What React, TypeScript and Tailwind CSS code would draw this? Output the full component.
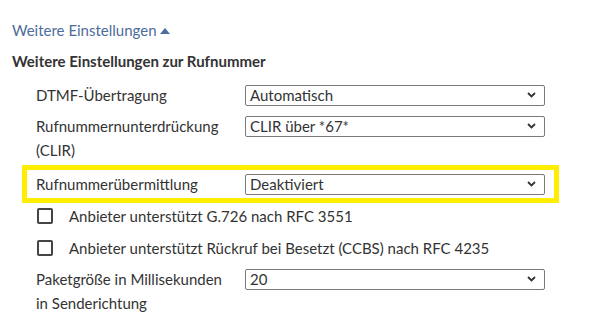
import type React from 'react';

const font = { fontFamily: 'Lato, "Open Sans", sans-serif' };

const Chevron = () => (
  <svg
    className="pointer-events-none absolute right-[9px] top-1/2 -translate-y-1/2"
    width="9"
    height="6"
    viewBox="0 0 9 6"
  >
    <path d="M1 1l3.5 3.5L8 1" fill="none" stroke="#333" strokeWidth="1.8" />
  </svg>
);

const Select = ({ value, className = '' }: { value: string; className?: string }) => (
  <div className={`relative w-[300px] ${className}`}>
    <select
      defaultValue={value}
      className="w-full h-[21px] appearance-none rounded-[2px] border border-[#7a7a7a] bg-white pl-[4px] pr-6 text-[15px] leading-[19px] text-[#333] outline-none"
      style={font}
    >
      <option>{value}</option>
    </select>
    <Chevron />
  </div>
);

const Row = ({ label, value, className = '' }: { label: React.ReactNode; value: string; className?: string }) => (
  <div className={`flex items-start ${className}`}>
    <div className="w-[209px] pr-4 leading-6">{label}</div>
    <Select value={value} className="mt-[1px]" />
  </div>
);

const Check = ({ label }: { label: string }) => (
  <label className="flex items-center h-6 pl-[37px] gap-[16px]">
    <span className="block w-[16px] h-[16px] rounded-[2px] border-2 border-[#444] bg-white" />
    <span>{label}</span>
  </label>
);

export default function App() {
  return (
    <div className="w-[594px] h-[327px] bg-white text-[15px] text-[#333] overflow-hidden pt-[18px]" style={font}>
      <div className="pl-3 leading-6 text-[#4d6c9c] flex items-center">
        Weitere Einstellungen
        <svg width="10" height="7" viewBox="0 0 10 7" className="ml-[3px]">
          <path d="M0 7L5 1l5 6z" fill="#4d6c9c" />
        </svg>
      </div>
      <div className="pl-3 mt-[7px] leading-6 font-bold">Weitere Einstellungen zur Rufnummer</div>

      <Row className="mt-[10px] pl-[36px]" label="DTMF-Übertragung" value="Automatisch" />
      <Row className="mt-[7px] pl-[36px]" label="Rufnummernunterdrückung (CLIR)" value="CLIR über *67*" />

      <div className="mt-[3px] ml-[22px] w-[537px] border-[5px] border-[#ffee00] pl-[9px] py-[2px]">
        <div className="flex items-center">
          <div className="w-[209px] leading-6">Rufnummerübermittlung</div>
          <Select value="Deaktiviert" />
        </div>
      </div>

      <div className="mt-[1px] flex flex-col gap-2">
        <Check label="Anbieter unterstützt G.726 nach RFC 3551" />
        <Check label="Anbieter unterstützt Rückruf bei Besetzt (CCBS) nach RFC 4235" />
      </div>

      <Row className="mt-[7px] pl-[36px]" label="Paketgröße in Millisekunden in Senderichtung" value="20" />
    </div>
  );
}
